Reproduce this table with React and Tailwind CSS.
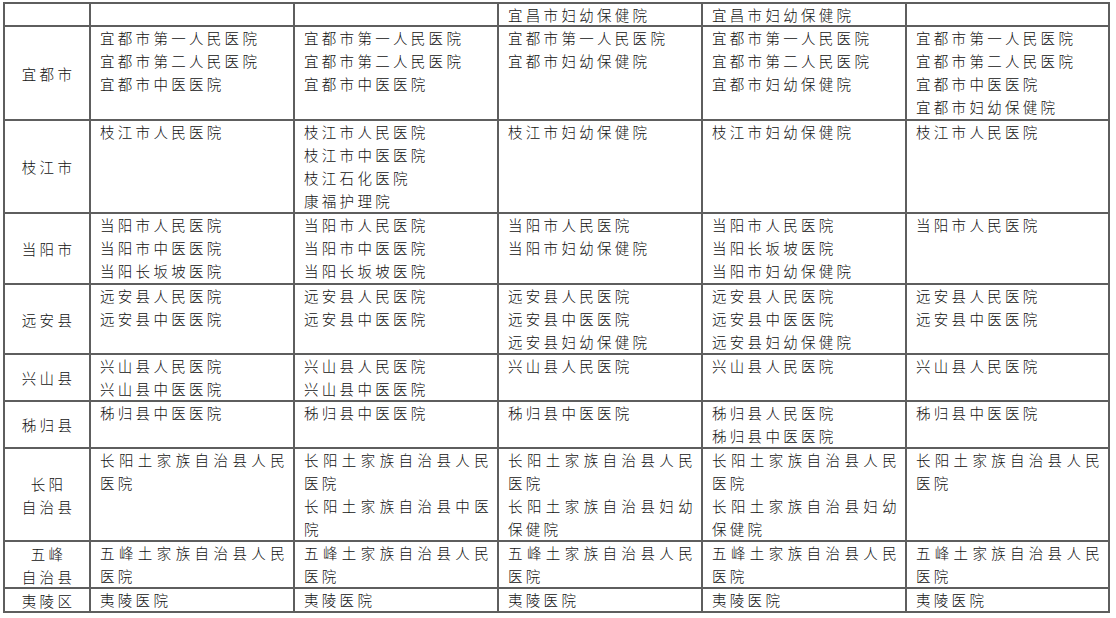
import React from "react";

const rows = [
  { name: [""], h: "h-[21px]", cells: [[], [], ["宜昌市妇幼保健院"], ["宜昌市妇幼保健院"], []] },
  {
    name: ["宜都市"],
    h: "h-[92px]",
    cells: [
      ["宜都市第一人民医院", "宜都市第二人民医院", "宜都市中医医院"],
      ["宜都市第一人民医院", "宜都市第二人民医院", "宜都市中医医院"],
      ["宜都市第一人民医院", "宜都市妇幼保健院"],
      ["宜都市第一人民医院", "宜都市第二人民医院", "宜都市妇幼保健院"],
      ["宜都市第一人民医院", "宜都市第二人民医院", "宜都市中医医院", "宜都市妇幼保健院"],
    ],
  },
  {
    name: ["枝江市"],
    h: "h-[91px]",
    cells: [
      ["枝江市人民医院"],
      ["枝江市人民医院", "枝江市中医医院", "枝江石化医院", "康福护理院"],
      ["枝江市妇幼保健院"],
      ["枝江市妇幼保健院"],
      ["枝江市人民医院"],
    ],
  },
  {
    name: ["当阳市"],
    h: "h-[69px]",
    cells: [
      ["当阳市人民医院", "当阳市中医医院", "当阳长坂坡医院"],
      ["当阳市人民医院", "当阳市中医医院", "当阳长坂坡医院"],
      ["当阳市人民医院", "当阳市妇幼保健院"],
      ["当阳市人民医院", "当阳长坂坡医院", "当阳市妇幼保健院"],
      ["当阳市人民医院"],
    ],
  },
  {
    name: ["远安县"],
    h: "h-[68px]",
    cells: [
      ["远安县人民医院", "远安县中医医院"],
      ["远安县人民医院", "远安县中医医院"],
      ["远安县人民医院", "远安县中医医院", "远安县妇幼保健院"],
      ["远安县人民医院", "远安县中医医院", "远安县妇幼保健院"],
      ["远安县人民医院", "远安县中医医院"],
    ],
  },
  {
    name: ["兴山县"],
    h: "h-[45px]",
    cells: [
      ["兴山县人民医院", "兴山县中医医院"],
      ["兴山县人民医院", "兴山县中医医院"],
      ["兴山县人民医院"],
      ["兴山县人民医院"],
      ["兴山县人民医院"],
    ],
  },
  {
    name: ["秭归县"],
    h: "h-[45px]",
    cells: [
      ["秭归县中医医院"],
      ["秭归县中医医院"],
      ["秭归县中医医院"],
      ["秭归县人民医院", "秭归县中医医院"],
      ["秭归县中医医院"],
    ],
  },
  {
    name: ["长阳", "自治县"],
    h: "h-[91px]",
    cells: [
      ["长阳土家族自治县人民医院"],
      ["长阳土家族自治县人民医院", "长阳土家族自治县中医院"],
      ["长阳土家族自治县人民医院", "长阳土家族自治县妇幼保健院"],
      ["长阳土家族自治县人民医院", "长阳土家族自治县妇幼保健院"],
      ["长阳土家族自治县人民医院"],
    ],
  },
  {
    name: ["五峰", "自治县"],
    h: "h-[45px]",
    cells: [
      ["五峰土家族自治县人民医院"],
      ["五峰土家族自治县人民医院"],
      ["五峰土家族自治县人民医院"],
      ["五峰土家族自治县人民医院"],
      ["五峰土家族自治县人民医院"],
    ],
  },
  {
    name: ["夷陵区"],
    h: "h-[22px]",
    cells: [["夷陵医院"], ["夷陵医院"], ["夷陵医院"], ["夷陵医院"], ["夷陵医院"]],
  },
];

export default function App() {
  return (
    <div className="w-[1116px] h-[618px] bg-white overflow-hidden pt-[2px] pl-[3px]">
      <div
        className="grid grid-cols-[84px_202px_202px_202px_202px_201px] gap-[2px] p-[2px] bg-[#5e5e5e] w-[1107px] text-[14.5px] leading-[23px] text-[#111111] tracking-[3.3px]"
        style={{ fontFamily: '"Noto Sans CJK SC", "Noto Sans", sans-serif' }}
      >
        {rows.map((r, ri) => (
          <React.Fragment key={ri}>
            <div className={`${r.h} bg-white flex flex-col items-center justify-center text-center font-light pl-[3px]`}>
              {r.name.map((n, i) => (
                <div key={i}>{n}</div>
              ))}
            </div>
            {r.cells.map((c, ci) => (
              <div key={ci} className={`${r.h} bg-white pl-[9px] pr-[5px] font-light`}>
                <div className="-mt-px">
                  {c.map((t, ti) => (
                    <div key={ti} className="text-justify">
                      {t}
                    </div>
                  ))}
                </div>
              </div>
            ))}
          </React.Fragment>
        ))}
      </div>
    </div>
  );
}
